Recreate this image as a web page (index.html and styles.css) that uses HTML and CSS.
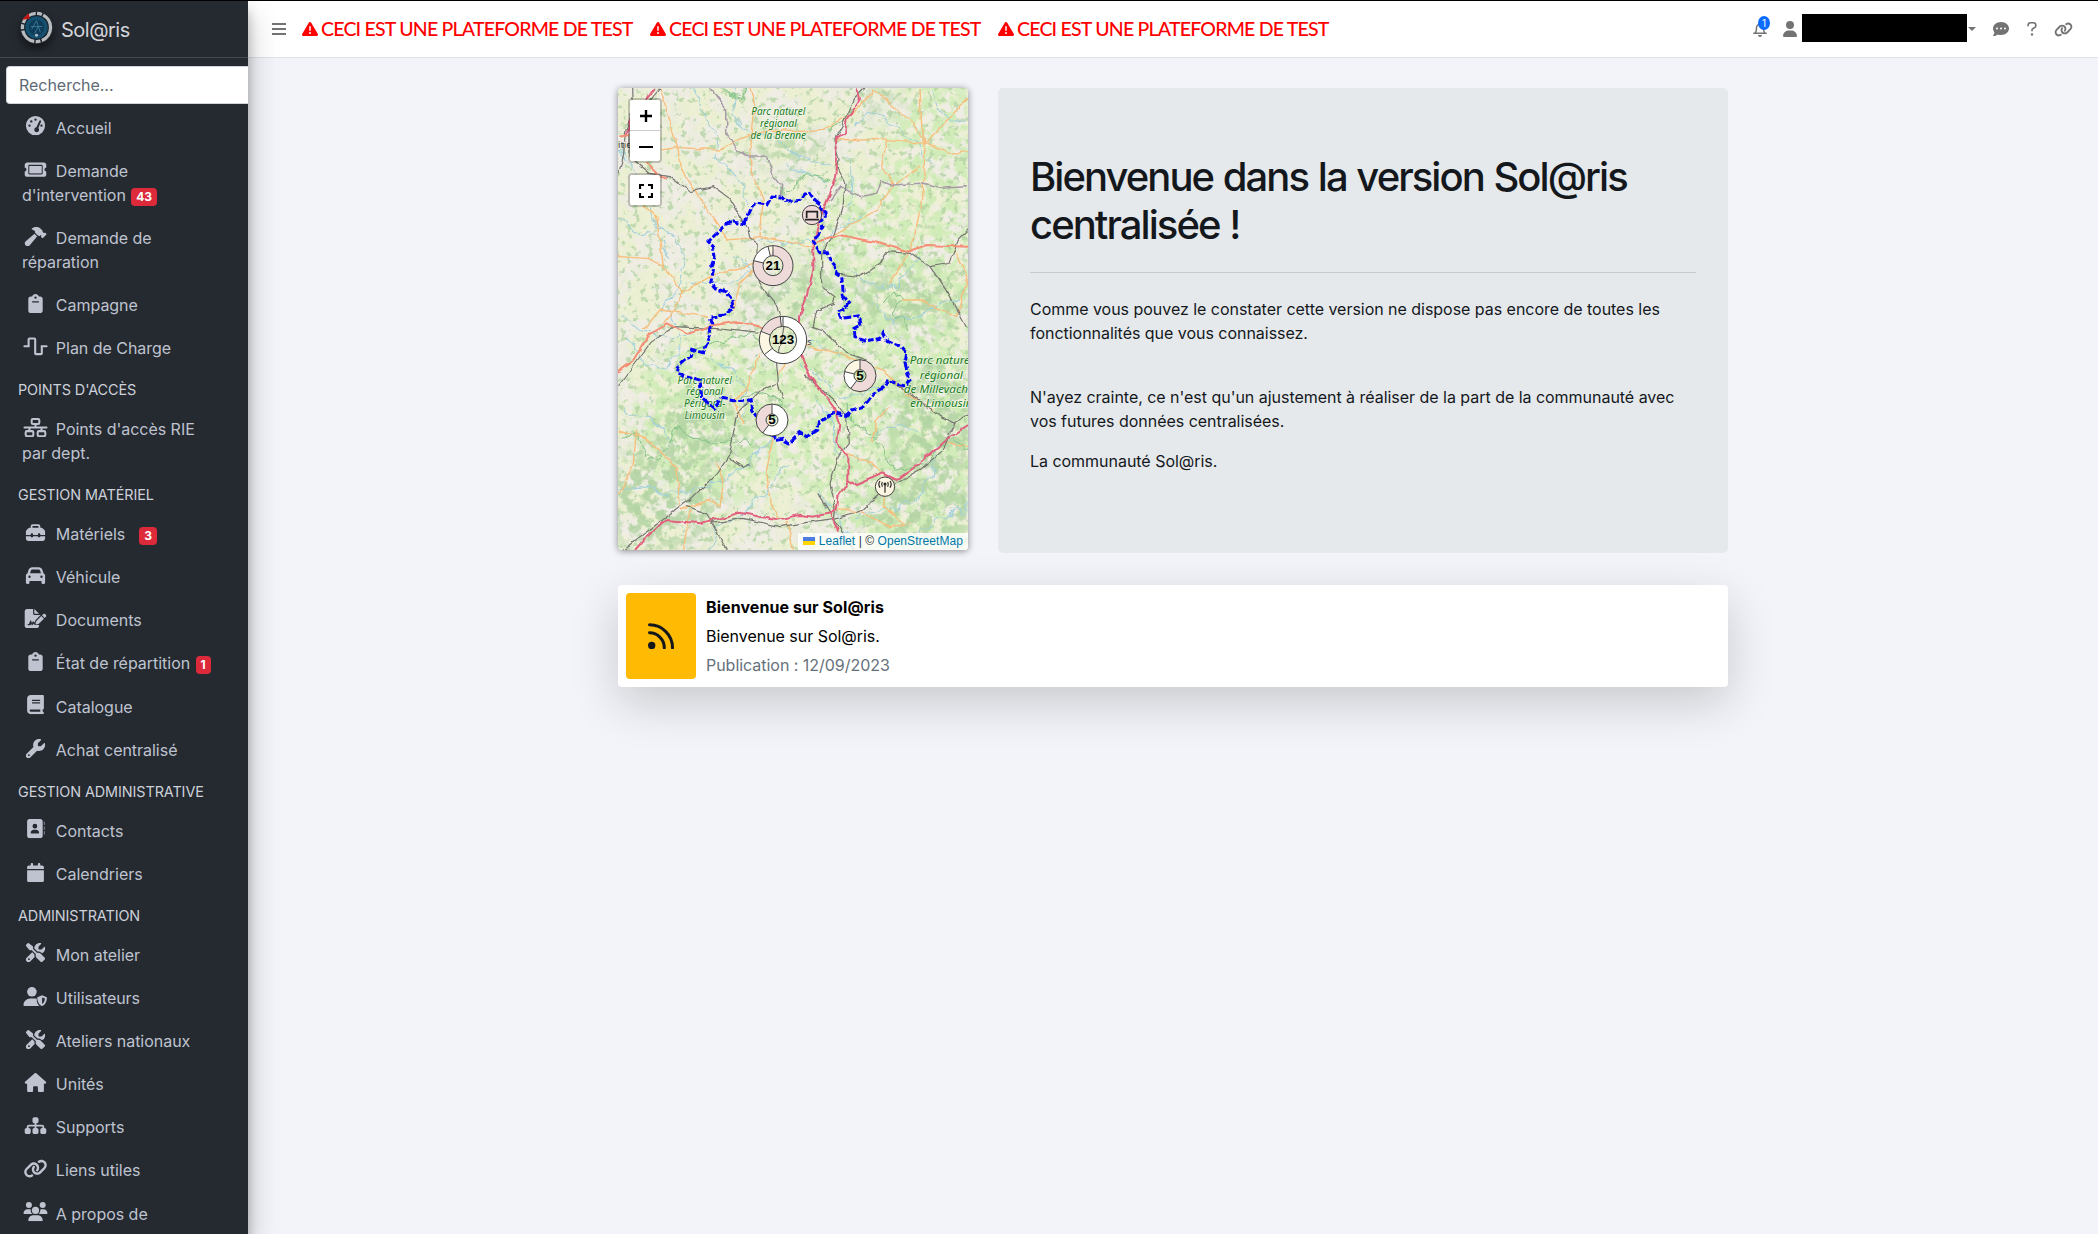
FILE: index.html
```html
<!DOCTYPE html>
<html lang="fr">
<head>
<meta charset="utf-8">
<title>Sol@ris</title>
<link rel="stylesheet" href="styles.css">
</head>
<body>
<svg class="sprite" width="0" height="0">
  <symbol id="gauge" viewBox="0 0 512 512"><path fill-rule="evenodd" d="M0 256a256 256 0 1 1 512 0A256 256 0 1 1 0 256zM288 96a32 32 0 1 0-64 0 32 32 0 1 0 64 0zM144 176a32 32 0 1 0 0-64 32 32 0 1 0 0 64zm-16 80a32 32 0 1 0-64 0 32 32 0 1 0 64 0zm288 32a32 32 0 1 0 0-64 32 32 0 1 0 0 64zM390 119c-12-6-26 0-32 12L280 303c-31 4-56 31-56 65 0 35 29 64 64 64s64-29 64-64c0-17-7-33-19-45l69-172c6-12 0-27-12-32z"/></symbol>
  <symbol id="ticket" viewBox="0 0 576 512"><path fill-rule="evenodd" d="M64 64C29 64 0 93 0 128v64c0 9 7 16 15 18 19 7 33 25 33 46s-14 39-33 46c-8 2-15 9-15 18v64c0 35 29 64 64 64h448c35 0 64-29 64-64v-64c0-9-7-16-15-18-19-7-33-25-33-46s14-39 33-46c8-2 15-9 15-18v-64c0-35-29-64-64-64H64zm64 96v192h320V160H128zm-32 0c0-18 14-32 32-32h320c18 0 32 14 32 32v192c0 18-14 32-32 32H128c-18 0-32-14-32-32V160z"/><path d="M128 160h320v192H128z" opacity=".85"/></symbol>
  <symbol id="hammer" viewBox="0 0 576 512"><path d="M413.500 237.500c-28.200 4.800-58.200-3.600-80-25.400l-38.100-38.100C280.400 159 272 138.800 272 117.600V105.500L192.300 62c-5.300-2.900-8.600-8.600-8.300-14.700s3.900-11.500 9.500-14L240.700 12.400C259 4.200 278.800 0 298.800 0h18.600c40.300 0 78.900 16 107.400 44.500l41.700 41.700c10.700 10.700 13.900 26.400 9.400 40.800l40 40 7-7c9.400-9.400 24.600-9.400 33.900 0l16 16c9.400 9.400 9.400 24.600 0 33.900l-80 80c-9.400 9.400-24.600 9.400-33.900 0l-16-16c-9.400-9.400-9.400-24.600 0-33.900l7-7-36-20zM27.400 377.100L260.900 182.600c3.500 4.900 7.500 9.600 11.800 14l38.100 38.100c6 6 12.400 11.200 19.200 15.700L134.900 484.600C120.400 502 98.900 512 76.300 512C34.100 512 0 477.800 0 435.700c0-22.600 10.100-44.100 27.400-58.600z"/></symbol>
  <symbol id="clipboard" viewBox="0 0 384 512"><path fill-rule="evenodd" d="M192 0c-42 0-77 27-90 64H64C29 64 0 93 0 128v320c0 35 29 64 64 64h256c35 0 64-29 64-64V128c0-35-29-64-64-64h-38C269 27 234 0 192 0zm0 64a32 32 0 1 1 0 64 32 32 0 1 1 0-64zm-80 128h160c9 0 16 7 16 16s-7 16-16 16H112c-9 0-16-7-16-16s7-16 16-16z"/></symbol>
  <symbol id="wave" viewBox="0 0 640 512"><path d="M24 248H136V64q0-24 24-24H288q24 0 24 24V432q0 24 24 24H464q24 0 24-24V248H616" fill="none" stroke="currentColor" stroke-width="56" stroke-linecap="round"/></symbol>
  <symbol id="network" viewBox="0 0 640 512"><g fill="none" stroke="currentColor" stroke-width="54"><rect x="218" y="28" width="204" height="134" rx="34"/><rect x="58" y="350" width="204" height="134" rx="34"/><rect x="378" y="350" width="204" height="134" rx="34"/><path d="M26 256H614M320 162V256M160 256V350M480 256V350" stroke-linecap="round"/></g></symbol>
  <symbol id="toolbox" viewBox="0 0 512 512"><path fill-rule="evenodd" d="M176 88v40h160V88c0-4-4-8-8-8H184c-4 0-8 4-8 8zm-48 40V88c0-31 25-56 56-56h144c31 0 56 25 56 56v40h28c13 0 25 5 34 14l52 52c9 9 14 21 14 34v92H384v-16c0-18-14-32-32-32s-32 14-32 32v16H192v-16c0-18-14-32-32-32s-32 14-32 32v16H0v-92c0-13 5-25 14-34l52-52c9-9 21-14 34-14h28zM0 416v-64h128c0 18 14 32 32 32s32-14 32-32h128c0 18 14 32 32 32s32-14 32-32h128v64c0 35-29 64-64 64H64c-35 0-64-29-64-64z"/></symbol>
  <symbol id="car" viewBox="0 0 512 512"><path d="M135.200 117.400L109.100 192H402.900l-26.100-74.600C372.300 104.600 360.200 96 346.600 96H165.400c-13.600 0-25.700 8.600-30.200 21.400zM39.600 196.800L74.800 96.300C88.300 57.800 124.600 32 165.400 32H346.600c40.800 0 77.100 25.800 90.600 64.300l35.200 100.500c23.200 9.600 39.600 32.500 39.600 59.200V400v48c0 17.700-14.300 32-32 32H448c-17.700 0-32-14.300-32-32V400H96v48c0 17.700-14.300 32-32 32H32c-17.700 0-32-14.300-32-32V400 256c0-26.700 16.400-49.600 39.600-59.200zM128 288a32 32 0 1 0-64 0 32 32 0 1 0 64 0zm288 32a32 32 0 1 0 0-64 32 32 0 1 0 0 64z"/></symbol>
  <symbol id="filepen" viewBox="0 0 576 512"><path d="M64 0C29 0 0 29 0 64v384c0 35 29 64 64 64h256c35 0 64-29 64-64v-19H286c-12 0-22-5-30-14l-16-31-22 37c-5 8-13 12-22 12h-12l-6-37-26 37H96c-13 0-24-6-24-18s11-18 24-18h18l29-76c6-15 25-15 31 0l18 52 20-30c10-16 30-16 40 0l15 26 20-71 137-137V160H256c-18 0-32-14-32-32V0H64zm192 0v128h128L256 0z"/><path d="M549 139c-16-16-41-16-57 0l-30 30 71 71 30-30c16-16 16-41 0-57l-14-14zM312 319c-4 4-7 9-9 15l-15 60c-1 6 0 12 4 16s10 6 16 4l60-15c6-1 11-4 15-9l130-129-71-71-130 129z"/></symbol>
  <symbol id="book" viewBox="0 0 448 512"><path d="M96 0C43 0 0 43 0 96V416c0 53 43 96 96 96H384h32c17.700 0 32-14.300 32-32s-14.300-32-32-32V384c17.700 0 32-14.300 32-32V32c0-17.700-14.300-32-32-32H384 96zm0 384H352v64H96c-17.700 0-32-14.300-32-32s14.300-32 32-32zm32-240c0-8.800 7.200-16 16-16H336c8.800 0 16 7.200 16 16s-7.200 16-16 16H144c-8.800 0-16-7.200-16-16zm16 48H336c8.800 0 16 7.200 16 16s-7.200 16-16 16H144c-8.800 0-16-7.200-16-16s7.200-16 16-16z"/></symbol>
  <symbol id="wrench" viewBox="0 0 512 512"><path d="M352 320c88.400 0 160-71.600 160-160c0-15.300-2.200-30.100-6.200-44.200c-3.100-10.800-16.400-13.200-24.300-5.300l-76.800 76.800c-3 3-7.100 4.700-11.300 4.700H336c-8.800 0-16-7.200-16-16V118.600c0-4.200 1.700-8.300 4.700-11.300l76.800-76.800c7.900-7.900 5.400-21.200-5.300-24.300C382.100 2.200 367.300 0 352 0C263.600 0 192 71.600 192 160c0 19.100 3.400 37.500 9.500 54.500L19.900 396.100C7.200 408.800 0 426.100 0 444.100C0 481.600 30.400 512 67.900 512c18 0 35.300-7.200 48-19.900L297.500 310.500c17 6.200 35.400 9.500 54.500 9.500zM80 408a24 24 0 1 1 0 48 24 24 0 1 1 0-48z"/></symbol>
  <symbol id="contacts" viewBox="0 0 512 512"><path fill-rule="evenodd" d="M96 0C61 0 32 29 32 64v384c0 35 29 64 64 64h288c35 0 64-29 64-64V64c0-35-29-64-64-64H96zm144 128a64 64 0 1 1 0 128 64 64 0 1 1 0-128zm-32 160h64c44 0 80 36 80 80 0 9-7 16-16 16H144c-9 0-16-7-16-16 0-44 36-80 80-80z"/><path d="M480 64c9 0 16 7 16 16v64c0 9-7 16-16 16V64zm0 128c9 0 16 7 16 16v64c0 9-7 16-16 16v-96zm0 128c9 0 16 7 16 16v64c0 9-7 16-16 16v-96z"/></symbol>
  <symbol id="calendar" viewBox="0 0 448 512"><path d="M96 32V64H48C21.500 64 0 85.500 0 112v48H448V112c0-26.500-21.500-48-48-48H352V32c0-17.700-14.300-32-32-32s-32 14.300-32 32V64H160V32c0-17.700-14.300-32-32-32S96 14.300 96 32zM448 192H0V464c0 26.500 21.500 48 48 48H400c26.500 0 48-21.500 48-48V192z"/></symbol>
  <symbol id="tools" viewBox="0 0 512 512"><path d="M78.600 5C69.100-2.400 55.600-1.500 47 7L7 47c-8.500 8.500-9.400 22-2.100 31.600l80 104c4.500 5.900 11.600 9.400 19 9.400h54.100l109 109c-14.700 29-10 65.400 14.300 89.600l112 112c12.500 12.500 32.800 12.500 45.300 0l64-64c12.500-12.500 12.500-32.800 0-45.300l-112-112c-24.200-24.200-60.600-29-89.600-14.300l-109-109V104c0-7.500-3.500-14.500-9.400-19L78.600 5zM19.900 396.100C7.200 408.800 0 426.100 0 444.100C0 481.600 30.400 512 67.900 512c18 0 35.300-7.200 48-19.900L233.700 374.300c-7.800-20.900-9-43.600-3.600-65.100l-61.700-61.700L19.900 396.100zM512 144c0-10.500-1.100-20.700-3.200-30.500c-2.400-11.200-16.100-14.100-24.200-6l-63.900 63.900c-3 3-7.100 4.700-11.300 4.700H352c-8.800 0-16-7.200-16-16V102.600c0-4.200 1.700-8.300 4.700-11.300l63.900-63.900c8.100-8.100 5.200-21.800-6-24.200C388.700 1.100 378.500 0 368 0C288.500 0 224 64.500 224 144l0 .8 85.300 85.300c36-9.100 75.800 .5 104 28.700L429 274.500c49-23 83-72.800 83-130.500zM56 432a24 24 0 1 1 48 0 24 24 0 1 1-48 0z"/></symbol>
  <symbol id="usershield" viewBox="0 0 640 512"><circle cx="224" cy="128" r="128"/><path d="M178 304C80 304 0 384 0 482c0 17 13 30 30 30h388c4 0 7-1 10-2-50-44-76-105-76-172 0-9 5-18 13-22-25-8-61-12-95-12h-92z"/><path fill-rule="evenodd" d="M496 222l-112 45c-10 4-16 12-16 22 0 76 31 180 119 218 6 3 12 3 18 0 88-38 119-142 119-218 0-10-6-18-16-22l-112-45zm0 58v176c50-27 72-90 75-147l-75-29z"/></symbol>
  <symbol id="house" viewBox="0 0 576 512"><path d="M575.800 255.500c0 18-15 32.100-32 32.100h-32l.7 160.200V472c0 22.100-17.900 40-40 40H392c-22.100 0-40-17.900-40-40V384c0-17.700-14.300-32-32-32H256c-17.700 0-32 14.300-32 32v88c0 22.100-17.900 40-40 40H104c-22.100 0-40-17.900-40-40V287.600H32c-18 0-32-14-32-32.100c0-9 3-17 10-24L266.400 8c7-7 15-8 22-8s15 2 21 7L564.800 231.500c8 7 12 15 11 24z"/></symbol>
  <symbol id="sitemap" viewBox="0 0 576 512"><path d="M208 80c0-26.500 21.500-48 48-48h64c26.500 0 48 21.500 48 48v64c0 26.500-21.500 48-48 48h-8v40H464c30.900 0 56 25.100 56 56v32h8c26.500 0 48 21.500 48 48v64c0 26.500-21.500 48-48 48H464c-26.500 0-48-21.500-48-48V368c0-26.500 21.500-48 48-48h8V288c0-4.400-3.600-8-8-8H312v40h8c26.500 0 48 21.500 48 48v64c0 26.500-21.500 48-48 48H256c-26.500 0-48-21.500-48-48V368c0-26.500 21.500-48 48-48h8V280H112c-4.400 0-8 3.600-8 8v32h8c26.500 0 48 21.500 48 48v64c0 26.500-21.500 48-48 48H48c-26.500 0-48-21.500-48-48V368c0-26.500 21.500-48 48-48h8V288c0-30.900 25.100-56 56-56H264V192h-8c-26.500 0-48-21.500-48-48V80z"/></symbol>
  <symbol id="link" viewBox="0 0 640 512"><path d="M579.800 267.700c56.500-56.500 56.500-148 0-204.500c-50-50-128.800-56.500-186.300-15.400l-1.600 1.100c-14.400 10.300-17.700 30.300-7.400 44.600s30.300 17.700 44.600 7.400l1.600-1.100c32.100-22.900 76-19.300 103.800 8.600c31.500 31.500 31.500 82.500 0 114L422.300 334.800c-31.500 31.500-82.500 31.500-114 0c-27.900-27.900-31.500-71.800-8.600-103.800l1.100-1.600c10.300-14.400 6.900-34.400-7.400-44.600s-34.400-6.900-44.600 7.400l-1.100 1.600C206.500 251.200 213 330 263 380c56.500 56.500 148 56.500 204.500 0L579.800 267.700zM60.200 244.300c-56.500 56.500-56.500 148 0 204.500c50 50 128.800 56.500 186.300 15.400l1.600-1.100c14.400-10.300 17.700-30.300 7.400-44.600s-30.300-17.700-44.600-7.400l-1.600 1.100c-32.100 22.900-76 19.300-103.800-8.600C74 372 74 321 105.500 289.500L217.700 177.200c31.500-31.500 82.500-31.500 114 0c27.900 27.900 31.500 71.800 8.600 103.900l-1.100 1.600c-10.300 14.400-6.900 34.400 7.400 44.600s34.400 6.900 44.600-7.400l1.100-1.600C433.500 260.800 427 182 377 132c-56.500-56.500-148-56.500-204.500 0L60.200 244.300z"/></symbol>
  <symbol id="users" viewBox="0 0 640 512"><circle cx="144" cy="80" r="80"/><circle cx="512" cy="80" r="80"/><circle cx="320" cy="224" r="96"/><path d="M0 299c0-59 48-107 107-107h43c16 0 31 4 44 10-10 68 20 98 41 118H21c-12 0-21-10-21-21zM405 320c30-27 48-66 43-118 13-6 28-10 44-10h43c58 0 105 48 105 107 0 12-9 21-21 21H405zM128 485c0-74 60-133 133-133h118c73 0 133 59 133 133 0 15-12 27-27 27H155c-15 0-27-12-27-27z"/></symbol>
  <symbol id="warn" viewBox="0 0 512 512"><path d="M256 32c14.200 0 27.300 7.500 34.500 19.800l216 368c7.300 12.400 7.300 27.700 .2 40.100S486.300 480 472 480H40c-14.300 0-27.600-7.700-34.700-20.100s-7-27.800 .2-40.100l216-368C228.700 39.500 241.800 32 256 32zm0 128c-13.300 0-24 10.700-24 24V296c0 13.300 10.700 24 24 24s24-10.700 24-24V184c0-13.300-10.700-24-24-24zm32 224a32 32 0 1 0-64 0 32 32 0 1 0 64 0z"/></symbol>
  <symbol id="user" viewBox="0 0 448 512"><path d="M224 256A128 128 0 1 0 224 0a128 128 0 1 0 0 256zm-45.700 48C79.800 304 0 383.800 0 482.300C0 498.700 13.300 512 29.700 512H418.300c16.400 0 29.700-13.300 29.700-29.700C448 383.800 368.200 304 269.700 304H178.300z"/></symbol>
  <symbol id="bell" viewBox="0 0 448 512"><path d="M224 24V64M74 384C112 330 112 290 112 220a112 120 0 0 1 224 0c0 70 0 110 38 164M26 392H422" fill="none" stroke="currentColor" stroke-width="48" stroke-linecap="round"/><path d="M160 448h128a64 64 0 0 1-128 0z"/></symbol>
  <symbol id="comment" viewBox="0 0 512 512"><path d="M256 448c141.400 0 256-93.100 256-208S397.400 32 256 32S0 125.100 0 240c0 45.100 17.700 86.800 47.700 120.900c-1.900 24.500-11.400 46.300-21.400 62.900c-5.500 9.200-11.100 16.600-15.200 21.600l-6.200 7.100c-4.600 4.600-5.900 11.400-3.400 17.400c2.500 6 8.300 9.900 14.800 9.900c28.700 0 57.600-8.900 81.600-19.300c22.900-10 42.400-21.900 54.300-30.600c31.800 11.500 67 17.900 104.100 17.900zM128 208a32 32 0 1 1 0 64 32 32 0 1 1 0-64zm128 0a32 32 0 1 1 0 64 32 32 0 1 1 0-64zm96 32a32 32 0 1 1 64 0 32 32 0 1 1-64 0z"/></symbol>
  <symbol id="help" viewBox="0 0 320 512"><path d="M34 150V140Q34 56 118 56H196Q284 56 284 140Q284 190 236 216L184 246Q160 260 160 290V312" fill="none" stroke="currentColor" stroke-width="52" stroke-linecap="round"/><circle cx="160" cy="430" r="38"/></symbol>
</svg>

<aside class="sidebar">
  <a class="brand">
    <svg class="logo" viewBox="0 0 34 34"><circle cx="17" cy="17" r="15" fill="#17232e"/><circle cx="17" cy="17" r="14.500" fill="none" stroke="#b9bcbf" stroke-width="3.400" stroke-dasharray="17 1.500 5 1.500"/><circle cx="17" cy="17" r="11.500" fill="#15506f"/><circle cx="17" cy="17" r="8" fill="#0e3c58"/><path d="M11 16h12M12 19l5-9 4 12M15 23l4-7" stroke="#3a7894" stroke-width="1" fill="none"/><path d="M2 9l7-7 1 6z" fill="#c01313"/><circle cx="17" cy="25" r="1.500" fill="#b8c4ca"/></svg>
    <span>Sol@ris</span>
  </a>
  <div class="search">Recherche...</div>
  <nav class="menu">
    <a><svg><use href="#gauge"/></svg> Accueil</a>
    <a><svg><use href="#ticket"/></svg> Demande<br>d'intervention <b class="badge">43</b></a>
    <a><svg><use href="#hammer"/></svg> Demande de<br>réparation</a>
    <a><svg><use href="#clipboard"/></svg> Campagne</a>
    <a><svg><use href="#wave"/></svg> Plan de Charge</a>
    <h6>POINTS D'ACCÈS</h6>
    <a><svg><use href="#network"/></svg> Points d'accès RIE<br>par dept.</a>
    <h6>GESTION MATÉRIEL</h6>
    <a><svg><use href="#toolbox"/></svg> Matériels <b class="badge spaced">3</b></a>
    <a><svg><use href="#car"/></svg> Véhicule</a>
    <a><svg><use href="#filepen"/></svg> Documents</a>
    <a><svg><use href="#clipboard"/></svg> État de répartition <b class="badge">1</b></a>
    <a><svg><use href="#book"/></svg> Catalogue</a>
    <a><svg><use href="#wrench"/></svg> Achat centralisé</a>
    <h6>GESTION ADMINISTRATIVE</h6>
    <a><svg><use href="#contacts"/></svg> Contacts</a>
    <a><svg><use href="#calendar"/></svg> Calendriers</a>
    <h6>ADMINISTRATION</h6>
    <a><svg><use href="#tools"/></svg> Mon atelier</a>
    <a><svg><use href="#usershield"/></svg> Utilisateurs</a>
    <a><svg><use href="#tools"/></svg> Ateliers nationaux</a>
    <a><svg><use href="#house"/></svg> Unités</a>
    <a><svg><use href="#sitemap"/></svg> Supports</a>
    <a><svg><use href="#link"/></svg> Liens utiles</a>
    <a><svg><use href="#users"/></svg> A propos de</a>
  </nav>
</aside>

<div class="page">
  <header class="topbar">
    <svg class="burger" viewBox="0 0 14 14"><path d="M0 2h14M0 7h14M0 12h14" stroke="currentColor" stroke-width="1.800"/></svg>
    <div class="alerts">
      <span class="alert"><svg><use href="#warn"/></svg><span>CECI EST UNE PLATEFORME DE TEST</span></span>
      <span class="alert"><svg><use href="#warn"/></svg><span>CECI EST UNE PLATEFORME DE TEST</span></span>
      <span class="alert"><svg><use href="#warn"/></svg><span>CECI EST UNE PLATEFORME DE TEST</span></span>
    </div>
    <div class="tools">
      <span class="notif"><svg class="i-bell"><use href="#bell"/></svg><i>1</i></span>
      <svg class="i-user"><use href="#user"/></svg>
      <span class="name"></span>
      <span class="caret"></span>
      <svg class="i-comment"><use href="#comment"/></svg>
      <svg class="i-help"><use href="#help"/></svg>
      <svg class="i-link"><use href="#link"/></svg>
    </div>
  </header>

  <main class="content">
    <div class="row">
      <div class="map">
        <svg class="tiles" viewBox="54 54 1050 1386">
          <defs>
            <filter id="f-farm" x="0" y="0" width="1" height="1" color-interpolation-filters="sRGB"><feTurbulence type="fractalNoise" baseFrequency=".03" numOctaves="4" seed="4"/><feColorMatrix values="0 0 0 0 .82  0 0 0 0 .925  0 0 0 0 .72  6 0 0 0 -2.500"/></filter>
            <filter id="f-pale" x="0" y="0" width="1" height="1" color-interpolation-filters="sRGB"><feTurbulence type="fractalNoise" baseFrequency=".012" numOctaves="5" seed="11"/><feColorMatrix values="0 0 0 0 .933  0 0 0 0 .941  0 0 0 0 .835  7 0 0 0 -3"/></filter>
            <filter id="f-wood" x="0" y="0" width="1" height="1" color-interpolation-filters="sRGB"><feTurbulence type="fractalNoise" baseFrequency=".03" numOctaves="5" seed="23"/><feColorMatrix values="0 0 0 0 .69  0 0 0 0 .825  0 0 0 0 .63  6 0 0 0 -2.600"/></filter>
            <filter id="f-speck" x="0" y="0" width="1" height="1" color-interpolation-filters="sRGB"><feTurbulence type="fractalNoise" baseFrequency=".05" numOctaves="5" seed="8"/><feColorMatrix values="0 0 0 0 .69  0 0 0 0 .825  0 0 0 0 .63  8 0 0 0 -4.700"/></filter>
            <filter id="rough" x="-5%" y="-5%" width="110%" height="110%"><feTurbulence type="fractalNoise" baseFrequency=".03" numOctaves="2" seed="3"/><feDisplacementMap in="SourceGraphic" scale="16" xChannelSelector="R" yChannelSelector="G"/></filter>
            <filter id="rough2" x="-5%" y="-5%" width="110%" height="110%"><feTurbulence type="fractalNoise" baseFrequency=".025" numOctaves="2" seed="9"/><feDisplacementMap in="SourceGraphic" scale="45" xChannelSelector="R" yChannelSelector="G"/></filter>
            <filter id="soft" x="-50%" y="-50%" width="200%" height="200%"><feGaussianBlur stdDeviation="35"/></filter>
            <mask id="m-wood"><rect x="54" y="54" width="1050" height="1386" fill="#000"/><g fill="#fff" filter="url(#soft)"><ellipse cx="560" cy="240" rx="110" ry="50"/><ellipse cx="840" cy="90" rx="70" ry="35"/><ellipse cx="520" cy="690" rx="140" ry="50"/><ellipse cx="930" cy="690" rx="170" ry="90"/><ellipse cx="640" cy="640" rx="80" ry="60"/><ellipse cx="1000" cy="1060" rx="130" ry="200"/><ellipse cx="180" cy="1290" rx="180" ry="150"/><ellipse cx="300" cy="1080" rx="150" ry="90"/><ellipse cx="960" cy="1330" rx="170" ry="110"/></g></mask>
            <mask id="m-farm"><rect x="54" y="54" width="1050" height="1386" fill="#222"/><g fill="#fff" filter="url(#soft)"><ellipse cx="1020" cy="260" rx="160" ry="250"/><ellipse cx="880" cy="900" rx="330" ry="600"/><ellipse cx="350" cy="1050" rx="260" ry="260"/></g></mask>
          </defs>
          <rect x="54" y="54" width="1050" height="1386" fill="#f0ede5"/>
          <rect x="54" y="54" width="1050" height="1386" filter="url(#f-pale)"/>
          <g mask="url(#m-farm)"><rect x="54" y="54" width="1050" height="1386" filter="url(#f-farm)"/></g>
          <g mask="url(#m-wood)" opacity=".85"><rect x="54" y="54" width="1050" height="1386" filter="url(#f-wood)"/></g>
          <rect x="54" y="54" width="1050" height="1386" filter="url(#f-speck)" opacity=".75"/>
          <g fill="none" filter="url(#rough2)" stroke="#a2d0dc" stroke-width="3.200">
            <path d="M60 230L110 330 160 400 150 450 220 500 250 560 240 660 180 720M290 54L300 110 350 200 345 260 420 330 450 420M410 60L395 140 460 190 520 200 590 260 700 290M760 170L800 130 850 140 900 190 960 230 1000 290M1000 54L1010 110 1060 160 1100 150M740 260L760 330 750 420M560 280L620 310 680 330M54 450L130 490 190 510 200 560M480 510L560 520 640 520 720 470 780 440M400 560L460 600 380 640 260 640M740 600L830 650 900 640 960 560M820 700L880 760 980 720 1080 690M60 740L140 790 210 800 280 790M80 800L130 880 200 900M210 720L250 820 200 900M330 870L400 900 440 960 420 1040M600 880L680 940 720 990 840 950M650 980L700 1060 720 1160M54 1270L140 1250 200 1280 330 1250 450 1180 520 1100M330 1440L350 1370 430 1330 500 1260 560 1180M650 1270L700 1340 760 1400M760 1340L860 1320 950 1290 1000 1220 1010 1130M800 1100L900 1060 960 1100M950 1440L970 1380 1060 1330 1104 1300M60 1020L160 1050 220 1110M560 760L640 820 720 860"/>
          </g>
          <g fill="none" filter="url(#rough2)" stroke="#8cc68d" stroke-width="3.500"><path d="M370 70L430 90 440 54M690 180L760 120M540 350L560 380 610 310 700 330M260 850L300 830 400 800 460 790 520 850M850 690L870 660 905 690 880 730 930 780M60 1100L110 1080 150 1170 210 1140 230 1070 330 1120 470 1110M420 990L500 960 540 990 520 1040M740 990L760 1060 830 1100M820 1100L860 1150 890 1210 980 1180 1050 1100 1104 1140"/></g>
          <g fill="none" filter="url(#rough)" stroke="#f7be7c" stroke-width="4">
            <path d="M180 54L215 170 235 240 240 290 290 370 370 490 385 510 480 500 M185 240L230 232 360 240 410 210 500 180 590 185 670 178 760 130 820 60 870 100 940 160 975 220 1104 85M960 54L965 170 975 220 970 360 950 470 930 540 870 640M710 210L830 205 860 212 975 220 1050 250 1104 245M860 210L845 290 880 345 830 420 700 495M450 54L465 110 450 250 455 310 490 390 480 500M885 345L960 290M480 500L640 530M54 560L140 565 190 590 250 665 340 615 400 600 470 580M190 590L170 440 130 410M250 665L220 720 190 760M470 590L420 640 400 720M320 740L180 720 130 780M480 850L440 960 400 990 430 1060M530 920L560 880 600 860M520 1100L500 1200 510 1300 540 1350M600 820L740 860 850 900 920 970 1000 1020M54 1080L130 1100 230 1190 240 1310M740 1150L820 1180 860 1220M820 1120L830 1050 870 1010M860 1240L850 1310 910 1360M240 1320L330 1290 360 1310 370 1240 350 1180M54 1280L100 1180 110 1080M700 1310L790 1330 870 1370 930 1360M270 1320L250 1440M560 1350L580 1440M1040 1120L1104 1130M1060 540L1104 620 1070 740 960 690 905 690"/>
          </g>
          <g fill="none" filter="url(#rough)" stroke="#777772" stroke-width="3.600">
            <path d="M98 54L100 110 76 190 70 260 54 310M180 54L145 100 90 190 90 260 150 310 210 320 270 365 340 350 390 385 435 460 450 500 475 520 470 620 500 670 525 700 550 760 530 880 535 940 550 990M795 54L760 90 730 160 705 205 720 270 710 290 735 340 730 400 700 500 665 550 665 650 705 680 700 700 650 720 640 770 670 780 740 850 800 870M712 612L780 620 840 580 860 545 930 550 990 590 1050 580 1075 510 1104 480M990 590L1050 680 1104 780M54 950L90 900 150 820 220 770 340 775 480 790M530 940L480 960 410 1030 390 1150 350 1210 270 1290 255 1300 120 1400 70 1440M260 1310L320 1330 380 1440M330 1360L430 1345 540 1370 700 1345M610 910L700 990 740 1040 745 1120 715 1160 690 1240 705 1310 700 1345 760 1440M700 1345L790 1320 855 1260 960 1200 1030 1140 1065 1060 1020 1040 930 970 860 930M1060 1060L1104 1035M385 1165L430 1195 450 1185M650 1270L690 1330"/>
            <path d="M330 54L380 120 380 190 410 235 445 260 500 262 520 320 545 350 540 385M690 390L720 350 780 380 830 370 845 330 880 345 960 340 1020 355 1104 350" stroke="#a79aa7" stroke-width="4.500"/>
          </g>
          <g fill="none" filter="url(#rough)" stroke="#e2607f" stroke-width="6">
            <path d="M165 54L130 100 90 150 80 200M770 54L780 90 740 150 735 190 708 205 712 260 705 320 690 370 662 440 640 520 640 600 625 660 600 740 600 850 630 920 700 1010 718 1060 712 1120 745 1160 745 1230 768 1245 850 1210 890 1230 960 1180 1040 1110 1104 1065M745 1230L715 1280 710 1320 690 1330 715 1385M690 1330L640 1340 600 1335 530 1350 420 1328 300 1360 200 1350 140 1400 105 1440"/>
            <path d="M640 520L720 495 840 520 925 545 980 525 1104 530M54 905L100 870 150 790 200 760 260 790 340 765 420 755 500 775" stroke="#f58f75"/>
            <path d="M54 200L90 195M140 280L180 320 200 325" stroke="#f58f75"/>
          </g>
          <g class="park" font-size="30" text-anchor="middle"><text x="535" y="136">Parc naturel</text><text x="535" y="172">régional</text><text x="535" y="207">de la Brenne</text></g>
          <g class="park" font-size="30" text-anchor="middle"><text x="314" y="941">Parc naturel</text><text x="314" y="976">régional</text><text x="314" y="1012">Périgord-</text><text x="314" y="1048">Limousin</text></g>
          <g class="park" font-size="35" text-anchor="middle"><text x="1024" y="882">Parc naturel</text><text x="1024" y="926">régional</text><text x="1024" y="969">de Millevaches</text><text x="1024" y="1012">en Limousin</text></g>
          <text class="town" x="54" y="235">itiers</text><text class="town" x="622" y="824">s</text>
          <path class="limit" filter="url(#rough)" d="M436 462L440 440 452 412 468 400 500 405 516 378 546 382 556 394 600 388 612 372 628 370 640 388 658 402 660 418 674 420 676 440 660 455 666 470 655 490 640 510 648 530 660 545 682 545 690 570 705 590 712 612 725 620 728 650 730 680 745 700 735 716 715 722 722 745 775 738 780 765 762 775 765 800 800 812 842 805 850 790 862 812 900 828 920 850 915 880 930 930 910 948 862 933 855 950 820 970 790 1010 755 1020 738 1036 700 1028 680 1045 655 1055 650 1080 620 1100 598 1088 565 1120 550 1105 530 1108 520 1095 470 1040 455 1020 450 990 400 992 365 985 355 1000 340 1014 305 985 300 930 232 910 235 890 270 860 275 838 308 848 330 790 335 760 328 742 375 735 392 720 400 715 395 690 375 665 345 655 332 640 340 600 335 585 345 560 340 530 325 515 345 495 378 462 400 456Z"/>
          <g class="donut" transform="translate(519 587)"><g transform="rotate(-90)" stroke-width="30"><circle r="45" stroke="#efdada"/><circle r="45" stroke="#fff" pathLength="360" stroke-dasharray="60 300" stroke-dashoffset="-285"/><circle r="45" stroke="#fdf6e3" pathLength="360" stroke-dasharray="15 345" stroke-dashoffset="-345"/></g><path class="edge" d="M0-60V-30M-15-58L-8-29M-58-15L-29-8"/><circle class="edge" r="60"/><circle class="edge" r="30"/><text y="12">21</text></g>
          <g class="donut" transform="translate(549 810)"><g transform="rotate(-90)" stroke-width="30"><circle r="56" stroke="#fff"/><circle r="56" stroke="#fdf6e3" pathLength="360" stroke-dasharray="60 300" stroke-dashoffset="-232"/><circle r="56" stroke="#efdada" pathLength="360" stroke-dasharray="60 300" stroke-dashoffset="-292"/></g><path class="edge" d="M0-71V-41M-8-70L-5-41M-66-26L-38-15M-56 44L-32 25"/><circle class="edge" r="71"/><circle class="edge" r="41"/><text y="13">123</text></g>
          <g class="donut" transform="translate(780 917)"><g transform="rotate(-90)" stroke-width="30"><circle r="33" stroke="#efdada"/><circle r="33" stroke="#fff" pathLength="360" stroke-dasharray="70 290" stroke-dashoffset="-215"/><circle r="33" stroke="#fdf6e3" pathLength="360" stroke-dasharray="75 285" stroke-dashoffset="-285"/></g><path class="edge" d="M0-48V-18M-46-12L-17-5M-28 39L-10 15"/><circle class="edge" r="48"/><circle class="edge" r="18"/><text y="12">5</text></g>
          <g class="donut" transform="translate(516 1050)"><g transform="rotate(-90)" stroke-width="30"><circle r="33" stroke="#fff"/><circle r="33" stroke="#efdada" pathLength="360" stroke-dasharray="145 215" stroke-dashoffset="-215"/></g><path class="edge" d="M0-48V-18M-28 39L-10 15"/><circle class="edge" r="48"/><circle class="edge" r="18"/><text y="12">5</text></g>
          <g transform="translate(636 435)"><circle class="edge pink" r="29"/><path d="M-16 9V-10H16V9M-21 14H21" fill="none" stroke="#222" stroke-width="5"/></g>
          <g transform="translate(855 1250)"><circle class="edge cream" r="29"/><path d="M0-8V18M-8-14Q-12-8-8 0M8-14Q12-8 8 0M-15-17Q-22-8-15 3M15-17Q22-8 15 3" fill="none" stroke="#222" stroke-width="3.500"/><circle cy="-8" r="4.500" fill="#222"/></g>
        </svg>
        <div class="controls">
          <div class="ctl"><span><svg viewBox="0 0 14 14"><path d="M7 1v12M1 7h12" stroke="#000" stroke-width="2.400"/></svg></span><span><svg viewBox="0 0 14 14"><path d="M0 7h14" stroke="#000" stroke-width="2"/></svg></span></div>
          <div class="ctl"><span><svg viewBox="0 0 14 14"><path d="M1 5V1H5M9 1H13V5M13 9V13H9M5 13H1V9" fill="none" stroke="#000" stroke-width="2.200"/></svg></span></div>
        </div>
        <div class="attribution"><svg viewBox="0 0 12 8"><path fill="#4c7be1" d="M0 0h12v4H0z"/><path fill="#ffd500" d="M0 4h12v4H0z"/></svg> <a>Leaflet</a> | © <a>OpenStreetMap</a></div>
      </div>
      <section class="welcome">
        <h1>Bienvenue dans la version Sol@ris<br>centralisée !</h1>
        <hr>
        <p class="intro">Comme vous pouvez le constater cette version ne dispose pas encore de toutes les<br>fonctionnalités que vous connaissez.</p>
        <p>N'ayez crainte, ce n'est qu'un ajustement à réaliser de la part de la communauté avec<br>vos futures données centralisées.</p>
        <p>La communauté Sol@ris.</p>
      </section>
    </div>
    <article class="news">
      <div class="feed"><svg viewBox="0 0 26 26"><circle cx="3.700" cy="22.500" r="3.700"/><path d="M1.500 9.800A15 15 0 0 1 16.300 25M1.500 1.800A23 23 0 0 1 24.500 25" fill="none" stroke="currentColor" stroke-width="3" stroke-linecap="round"/></svg></div>
      <div class="lines"><strong>Bienvenue sur Sol@ris</strong><span>Bienvenue sur Sol@ris.</span><span class="date">Publication : 12/09/2023</span></div>
    </article>
  </main>
</div>
</body>
</html>
```
FILE: styles.css
```css
* { box-sizing: border-box; }
body {
  margin: 0;
  height: 1234px;
  display: flex;
  overflow: hidden;
  border-top: 1px solid #000;
  background: #f3f4f9;
  color: #14181c;
  font: 16px/24px Inter, "Liberation Sans", sans-serif;
  letter-spacing: -.03px;
}
svg { fill: currentColor; }
.sprite { display: none; }

.sidebar {
  position: relative;
  z-index: 2;
  flex: 0 0 248px;
  height: 1233px;
  overflow: clip;
  overflow-clip-margin: 60px;
  background: #252a31;
  color: #bfc3cf;
  box-shadow: 0 14px 28px rgba(0,0,0,.25), 0 10px 10px rgba(0,0,0,.22);
}
.brand {
  display: flex;
  align-items: center;
  height: 57px;
  padding-left: 20px;
  gap: 8px;
  border-bottom: 1px solid #454b53;
  color: #d3d4d7;
  font-size: 20px;
  letter-spacing: -.5px;
}
.brand span { padding-top: 2px; }
.logo { width: 33px; height: 33px; margin-top: -3px; border-radius: 50%; box-shadow: 0 5px 9px rgba(0,0,0,.5); }
.search {
  height: 38px;
  margin: 8px 0 3.500px 6px;
  padding: 6px 12px;
  border: 1px solid #ced4da;
  border-right: 0;
  border-radius: 4px 0 0 4px;
  background: #fff;
  color: #606b75;
}
.menu a {
  display: block;
  margin-bottom: 3.200px;
  padding: 8px 0 8px 22px;
  white-space: nowrap;
}
.menu a > svg { width: 27px; height: 19.200px; margin-right: 2.400px; vertical-align: -2px; }
.menu h6 { margin: 0; padding: 8px 0 8px 18px; font-weight: 400; font-size: 14.400px; line-height: 21.600px; letter-spacing: -.09px; color: #cdd1d9; }
.badge {
  display: inline-block;
  margin-left: 1px;
  padding: 3px 5px 3px;
  border-radius: 4px;
  background: #dc2a3a;
  color: #fff;
  font-size: 12px;
  line-height: 12px;
  font-weight: 700;
}
.spaced { margin-left: 9px; padding: 3px 5.500px; }

.page { flex: 1; }
.topbar {
  display: flex;
  align-items: center;
  height: 57px;
  padding: 0 25px 0 24px;
  border-bottom: 1px solid #dee2e6;
  background: #fff;
  color: #737373;
}
.burger { width: 14px; height: 14px; }
.alerts { display: flex; margin-left: 16px; color: #f00; }
.alert { display: flex; align-items: center; width: 348px; gap: 3px; font: 500 19.500px/24px Lato, sans-serif; letter-spacing: -.78px; white-space: nowrap; }
.alert svg { width: 16px; height: 16px; }
.tools { display: flex; align-items: center; margin-left: auto; }
.notif { position: relative; display: flex; }
.i-bell { width: 14px; height: 16px; }
.notif i {
  position: absolute;
  left: 5px;
  top: -5px;
  width: 12px;
  height: 14px;
  border-radius: 50%;
  background: #0a6cff;
  color: #fff;
  font: 10px/14px Inter, sans-serif;
  text-align: center;
}
.i-user { width: 14px; height: 16px; margin-left: 16px; }
.name { width: 165px; height: 28px; margin-left: 5px; margin-top: -2px; background: #000; }
.caret { margin-left: 1px; border: 4px solid transparent; border-top-color: currentColor; border-bottom: 0; }
.i-comment { width: 16px; height: 16px; margin-left: 17px; }
.i-help { width: 10px; height: 16px; margin-left: 18px; }
.i-link { width: 19px; height: 15px; margin-left: 17px; }

.content { width: 1110px; margin: 30px auto 0 370px; }
.row { display: flex; gap: 30px; }
.map {
  position: relative;
  width: 350px;
  height: 462px;
  overflow: hidden;
  border-radius: 4px;
  box-shadow: 0 1px 7px rgba(0,0,0,.45);
}
.tiles { display: block; width: 350px; height: 462px; letter-spacing: 0; }
.park { font-family: "Noto Sans", sans-serif; font-style: italic; fill: #1a7d1a; paint-order: stroke; stroke: rgba(255,255,255,.6); stroke-width: 4px; }
.town { font: 28px "Noto Sans", sans-serif; fill: #444; }
.limit { fill: none; stroke: #0000f5; stroke-width: 9; stroke-dasharray: 20 6; }
.donut { fill: none; }
.donut text { font: 700 40px "Liberation Sans", sans-serif; fill: #000; text-anchor: middle; }
.edge { fill: none; stroke: #444; stroke-width: 3; }
.pink { fill: #efdada; }
.cream { fill: #fdf6e3; }
.controls { position: absolute; left: 10px; top: 10px; display: grid; gap: 10px; }
.ctl { border: 2px solid rgba(0,0,0,.2); border-radius: 4px; background-clip: padding-box; overflow: hidden; }
.ctl span { display: flex; width: 30px; height: 30px; align-items: center; justify-content: center; background: #fff; }
.ctl span + span { border-top: 1px solid #ccc; height: 31px; }
.ctl svg { width: 14px; height: 14px; margin: 1px 0 0 1px; }
.attribution {
  position: absolute;
  right: 0;
  bottom: 0;
  padding: 0 5px;
  background: rgba(255,255,255,.8);
  color: #333;
  font: 12px/17px "Liberation Sans", sans-serif;
  letter-spacing: .06px;
}
.attribution a { color: #0078a8; }
.attribution svg { width: 12px; height: 8px; }

.welcome { width: 730px; height: 464.500px; padding: 65px 32px 0; border-radius: 5px; background: #e5e9ec; }
.welcome h1 { margin: 0 0 23px; font-size: 40px; line-height: 48px; font-weight: 500; letter-spacing: -1.950px; word-spacing: 1px; white-space: nowrap; }
.welcome hr { height: 1px; margin: 0 0 24px; border: 0; background: #c6cacd; }
.welcome p { margin: 0 0 16px; white-space: nowrap; }
.welcome .intro { margin-bottom: 40px; }

.news {
  display: flex;
  height: 102px;
  margin-top: 32.500px;
  padding: 8px;
  gap: 10px;
  border-radius: 4px;
  background: #fff;
  color: #000;
  box-shadow: 0 16px 48px rgba(0,0,0,.175);
}
.feed { display: flex; width: 70px; height: 86px; align-items: center; justify-content: center; border-radius: 4px; background: #ffba03; color: #14181c; }
.feed svg { width: 26px; height: 26px; }
.lines { display: grid; grid-auto-rows: 29px; line-height: 29px; }
.lines strong { letter-spacing: .08px; }
.date { color: #66717b; }
```
